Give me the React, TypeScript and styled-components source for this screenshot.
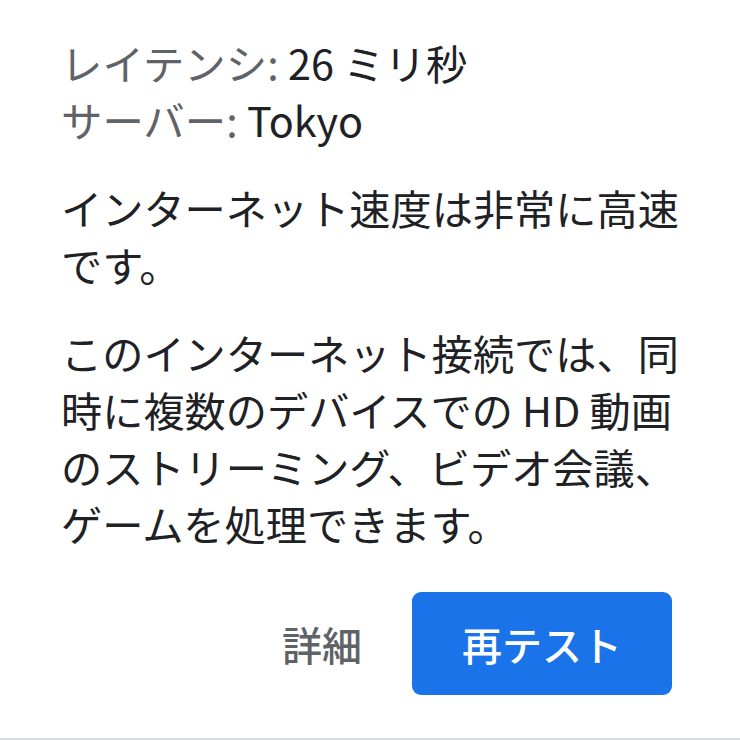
import styled, { createGlobalStyle } from 'styled-components';

const GlobalStyle = createGlobalStyle`
  html, body {
    margin: 0;
    padding: 0;
    background: #fff;
  }
  body {
    font-family: "Noto Sans CJK JP", "Noto Sans", sans-serif;
  }
`;

const Card = styled.div`
  width: 740px;
  height: 740px;
  box-sizing: border-box;
  padding: 34px 44px 0 61px;
  border-bottom: 2px solid #dadce0;
  display: flex;
  flex-direction: column;
`;

const Meta = styled.div`
  font-size: 41.4px;
  line-height: 57px;
  color: #202124;
`;

const MetaRow = styled.div`
  white-space: nowrap;
`;

const Label = styled.span`
  color: #5f6368;
`;

const Text = styled.p`
  margin: 31px 0 0;
  font-size: 41.2px;
  line-height: 57px;
  color: #202124;
`;

const Actions = styled.div`
  display: flex;
  justify-content: flex-end;
  align-items: center;
  gap: 30px;
  margin-top: 40px;
  padding-right: 24px;
`;

const TextButton = styled.button`
  border: none;
  background: none;
  font-family: inherit;
  font-size: 40px;
  font-weight: 500;
  color: #5f6368;
  padding: 0 20px;
  height: 103px;
  cursor: pointer;
`;

const PrimaryButton = styled.button`
  border: none;
  background: #1a73e8;
  color: #fff;
  font-family: inherit;
  font-size: 40px;
  font-weight: 500;
  width: 260px;
  height: 103px;
  border-radius: 9px;
  cursor: pointer;
`;

export default function App() {
  return (
    <>
      <GlobalStyle />
      <Card>
        <Meta>
          <MetaRow>
            <Label>レイテンシ:</Label> 26 ミリ秒
          </MetaRow>
          <MetaRow>
            <Label>サーバー:</Label> Tokyo
          </MetaRow>
        </Meta>
        <Text>インターネット速度は非常に高速です。</Text>
        <Text>
          このインターネット接続では、同時に複数のデバイスでの HD 動画のストリーミング、ビデオ会議、ゲームを処理できます。
        </Text>
        <Actions>
          <TextButton>詳細</TextButton>
          <PrimaryButton>再テスト</PrimaryButton>
        </Actions>
      </Card>
    </>
  );
}
